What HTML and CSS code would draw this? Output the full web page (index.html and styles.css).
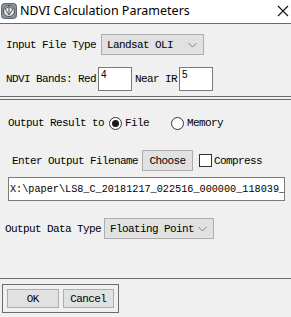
FILE: index.html
```html
<!DOCTYPE html>
<html lang="en">
<head>
    <meta charset="UTF-8">
    <title>NDVI Calculation Parameters</title>
    <link rel="stylesheet" href="styles.css">
</head>
<body>
<div id="dialog">
    <div class="titlebar">
        <svg class="app-icon" width="16" height="16" viewBox="0 0 16 16">
            <rect x="0.5" y="0.5" width="15" height="15" rx="3" fill="#8a9299" stroke="#5d656c"/>
            <circle cx="8" cy="8" r="5.5" fill="#e8ecef" stroke="#4b5258"/>
            <path d="M4 6 L8 3.5 L12 6 M4 6 L8 12 L12 6 M8 3.5 L8 12" fill="none" stroke="#4b5258" stroke-width="1"/>
        </svg>
        <span class="title">NDVI Calculation Parameters</span>
        <svg class="close" width="12" height="12" viewBox="0 0 12 12">
            <path d="M1 1 L11 11 M11 1 L1 11" stroke="#111" stroke-width="1.1"/>
        </svg>
    </div>

    <div class="panel top">
        <div class="row">
            <span class="label">Input File Type</span>
            <div class="select sel-type">
                <span>Landsat OLI</span>
                <svg class="arrow" width="9" height="6" viewBox="0 0 9 6"><path d="M0.5 1 L4.5 5 L8.5 1" fill="none" stroke="#7f7f7f"/></svg>
            </div>
        </div>
        <div class="row bands">
            <span class="label">NDVI Bands: Red</span>
            <input class="num" type="text" value="4">
            <span class="label">Near IR</span>
            <input class="num" type="text" value="5">
        </div>
    </div>

    <div class="panel mid">
        <div class="row radios">
            <span class="label">Output Result to</span>
            <span class="radio on"></span><span class="label">File</span>
            <span class="radio gap"></span><span class="label">Memory</span>
        </div>
        <div class="row out-name">
            <span class="label">Enter Output Filename</span>
            <span class="btn choose">Choose</span>
            <span class="check"></span><span class="label">Compress</span>
        </div>
        <input class="path" type="text" value="X:\paper\LS8_C_20181217_022516_000000_118039_">
        <div class="row dtype">
            <span class="label">Output Data Type</span>
            <div class="select sel-data">
                <span>Floating Point</span>
                <svg class="arrow" width="9" height="6" viewBox="0 0 9 6"><path d="M0.5 1 L4.5 5 L8.5 1" fill="none" stroke="#7f7f7f"/></svg>
            </div>
        </div>
    </div>

    <div class="footer">
        <div class="btn-group">
            <span class="btn">OK</span>
            <span class="btn">Cancel</span>
        </div>
    </div>
</div>
</body>
</html>
```

FILE: styles.css
```css
html,body,div,p{
    margin: 0;
    padding: 0;
}
body{
    background-color: #f0f0f0;
    font-family: "Liberation Mono", "DejaVu Sans Mono", monospace;
    font-size: 11px;
    letter-spacing: -0.6px;
    color: #000000;
}
#dialog{
    width: 291px;
    height: 317px;
    overflow: hidden;
}
.titlebar{
    background-color: #ffffff;
    border-bottom: 1px solid #6b6b6b;
    display: flex;
    align-items: center;
    padding-left: 1px;
    box-sizing: border-box;
    height: 24px;
}
.app-icon{
    margin-top: -2px;
}
.title{
    font-family: "Noto Sans", sans-serif;
    font-size: 12.5px;
    letter-spacing: 0;
    margin-left: 3px;
    margin-top: -2px;
}
.close{
    margin-left: auto;
    margin-right: 2px;
    margin-top: -2px;
}
.panel{
    border-bottom: 1px solid #6b6b6b;
}
.panel.top{
    padding: 10px 0 5px 6px;
    height: 73px;
    box-sizing: border-box;
}
.panel.mid{
    border-top: 1px solid #6b6b6b;
    margin-top: 2px;
    height: 180px;
    box-sizing: border-box;
    padding: 15px 0 0 0;
}
.row{
    display: flex;
    align-items: center;
}
.select{
    display: flex;
    align-items: center;
    height: 21px;
    box-sizing: border-box;
    border: 1px solid #adadad;
    background-color: #e1e1e1;
    padding: 0 6px 0 5px;
    margin-left: 5px;
}
.select .arrow{
    margin-left: auto;
}
.sel-type{
    width: 103px;
}
.bands{
    margin-top: 12px;
}
.num{
    width: 34px;
    height: 24px;
    box-sizing: border-box;
    border: 1px solid #7a7a7a;
    background: #ffffff;
    font-family: "Liberation Sans", sans-serif;
    font-size: 10px;
    padding: 0 0 9px 2px;
    margin: 0 3px 0 2px;
    outline: none;
}
.radios{
    padding-left: 8px;
    height: 16px;
}
.radio{
    width: 11px;
    height: 11px;
    border: 1px solid #333333;
    border-radius: 50%;
    background: #ffffff;
    margin: 0 3px 0 5px;
    position: relative;
}
.radio.on::after{
    content: "";
    position: absolute;
    left: 2px;
    top: 2px;
    width: 7px;
    height: 7px;
    border-radius: 50%;
    background: #1a1a1a;
}
.radio.gap{
    margin-left: 22px;
}
.out-name{
    padding-left: 12px;
    margin-top: 19px;
}
.btn{
    display: inline-flex;
    align-items: center;
    justify-content: center;
    border: 1px solid #adadad;
    background-color: #e1e1e1;
    box-sizing: border-box;
}
.choose{
    width: 51px;
    height: 21px;
    margin-left: 4px;
}
.check{
    width: 13px;
    height: 13px;
    box-sizing: border-box;
    border: 1px solid #333333;
    background: #ffffff;
    margin-left: 6px;
    margin-right: 2px;
}
.path{
    display: block;
    width: 277px;
    height: 24px;
    box-sizing: border-box;
    margin: 6px 0 0 8px;
    border: 1px solid #7a7a7a;
    background: #ffffff;
    font-family: "Liberation Mono", monospace;
    font-size: 10.2px;
    letter-spacing: 0;
    padding: 0 0 0 1px;
    outline: none;
}
.dtype{
    padding-left: 5px;
    margin-top: 17px;
}
.sel-data{
    width: 110px;
    margin-left: 3px;
}
.footer{
    padding: 5px 0 0 2px;
}
.btn-group{
    display: flex;
    gap: 4px;
    width: 117px;
    height: 29px;
    box-sizing: border-box;
    border: 1px solid #6b6b6b;
    padding: 4px 4px 0 4px;
}
.btn-group .btn{
    width: 52px;
    height: 19px;
}
```
